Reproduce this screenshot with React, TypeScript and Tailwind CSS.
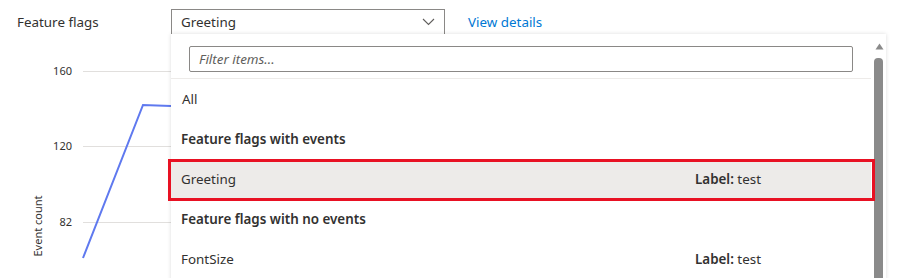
import React from 'react';

const font = { fontFamily: '"Segoe UI", "Noto Sans", "Open Sans", sans-serif' };

function Chart() {
  return (
    <svg width="171" height="244" viewBox="0 34 171 244" className="block">
      <line x1="83" y1="70.5" x2="171" y2="70.5" stroke="#e1dfdd" />
      <line x1="83" y1="145.5" x2="171" y2="145.5" stroke="#e1dfdd" />
      <line x1="83" y1="221.5" x2="171" y2="221.5" stroke="#e1dfdd" />
      <text x="72" y="74" textAnchor="end" fontSize="11" fill="#323130" style={font}>160</text>
      <text x="72" y="149" textAnchor="end" fontSize="11" fill="#323130" style={font}>120</text>
      <text x="72" y="225" textAnchor="end" fontSize="11" fill="#323130" style={font}>82</text>
      <text
        x="0"
        y="0"
        fontSize="11"
        fill="#323130"
        textAnchor="middle"
        transform="translate(42 225) rotate(-90)"
        style={font}
      >
        Event count
      </text>
      <polyline points="83,257 143,104 171,105" fill="none" stroke="#5f79ef" strokeWidth="2" />
    </svg>
  );
}

export default function App() {
  return (
    <div className="relative w-[900px] h-[278px] overflow-hidden bg-white text-[13.4px] text-[#323130]" style={font}>
      {/* Header row */}
      <div className="flex items-center h-[26px] mt-[9px]">
        <span className="w-[171px] pl-[17px]">Feature flags</span>
        <div className="flex items-center justify-between w-[274px] h-[26px] border border-[#8a8886] pl-[9px] pr-[9px]">
          <span>Greeting</span>
          <svg width="13" height="8" viewBox="0 0 13 8">
            <path d="M1 1 L6.5 6.5 L12 1" fill="none" stroke="#605e5c" strokeWidth="1.1" />
          </svg>
        </div>
        <span className="ml-[23px] text-[#0078d4]">View details</span>
      </div>

      <Chart />

      {/* Dropdown panel */}
      <div className="absolute left-[171px] top-[34px] w-[715px] h-[260px] bg-white shadow-[0_0_4px_rgba(0,0,0,0.14)] flex">
        <div className="w-[700px]">
          <div className="pt-[12px] pl-[18px] pb-[6px] border-b border-[#edebe9]">
            <div className="w-[664px] h-[26px] border border-[#8a8886] rounded-[2px] flex items-center pl-[9px]">
              <span className="italic text-[#605e5c]">Filter items...</span>
            </div>
          </div>
          <div className="h-[40px] flex items-center pl-[11px]">All</div>
          <div className="h-[40px] flex items-center pl-[10px] font-semibold">Feature flags with events</div>
          <div className="h-[40px] flex items-center pl-[10px] bg-[#edebe9]">
            <span className="w-[514px]">Greeting</span>
            <span><span className="font-semibold">Label:</span> test</span>
          </div>
          <div className="h-[40px] flex items-center pl-[10px] font-semibold">Feature flags with no events</div>
          <div className="h-[40px] flex items-center pl-[10px]">
            <span className="w-[514px]">FontSize</span>
            <span><span className="font-semibold">Label:</span> test</span>
          </div>
        </div>
        {/* Scrollbar */}
        <div className="w-[15px] flex flex-col items-start pl-[3px]">
          <svg width="9" height="7" viewBox="0 0 9 7" className="mt-[9px] ml-[1px]">
            <path d="M0.5 6.5 L4.5 0.5 L8.5 6.5 Z" fill="#8a8a8a" />
          </svg>
          <div className="mt-[8px] w-[9px] flex-1 bg-[#8a8a8a] rounded-t-[4px]" />
        </div>
      </div>

      {/* Highlight annotation */}
      <div className="absolute left-[168px] top-[159px] w-[707px] h-[42px] border-[3px] border-[#e81123]" />
    </div>
  );
}
